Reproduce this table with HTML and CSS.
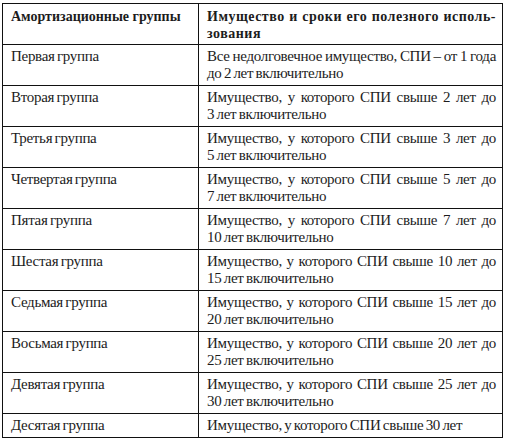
FILE: index.html
```
<!DOCTYPE html>
<html lang="ru">
<head>
<meta charset="utf-8">
<link rel="stylesheet" href="styles.css">
</head>
<body>
<table class="groups">
  <colgroup><col class="c1"><col class="c2"></colgroup>
  <thead>
    <tr><th>Амортизационные группы</th><th class="wide"><span class="hl">Имущество и сроки его полезного исполь-</span><span>зования</span></th></tr>
  </thead>
  <tbody>
    <tr><td>Первая группа</td><td class="desc">Все недолговечное имущество, СПИ – от 1&nbsp;года до 2&nbsp;лет включительно</td></tr>
    <tr><td>Вторая группа</td><td class="desc">Имущество, у которого СПИ свыше 2&nbsp;лет до 3&nbsp;лет включительно</td></tr>
    <tr><td>Третья группа</td><td class="desc">Имущество, у которого СПИ свыше 3&nbsp;лет до 5&nbsp;лет включительно</td></tr>
    <tr><td>Четвертая группа</td><td class="desc">Имущество, у которого СПИ свыше 5&nbsp;лет до 7&nbsp;лет включительно</td></tr>
    <tr><td>Пятая группа</td><td class="desc">Имущество, у которого СПИ свыше 7&nbsp;лет до 10&nbsp;лет включительно</td></tr>
    <tr><td>Шестая группа</td><td class="desc">Имущество, у которого СПИ свыше 10&nbsp;лет до 15&nbsp;лет включительно</td></tr>
    <tr><td>Седьмая группа</td><td class="desc">Имущество, у которого СПИ свыше 15&nbsp;лет до 20&nbsp;лет включительно</td></tr>
    <tr><td>Восьмая группа</td><td class="desc">Имущество, у которого СПИ свыше 20&nbsp;лет до 25&nbsp;лет включительно</td></tr>
    <tr><td>Девятая группа</td><td class="desc">Имущество, у которого СПИ свыше 25&nbsp;лет до 30&nbsp;лет включительно</td></tr>
    <tr><td>Десятая группа</td><td class="desc">Имущество, у которого СПИ свыше 30&nbsp;лет</td></tr>
  </tbody>
</table>
</body>
</html>
```
FILE: styles.css
```
html, body {
  margin: 0;
  padding: 0;
  background: #fff;
}
body {
  padding: 3px 0 0 2px;
  font-family: "Liberation Serif", "DejaVu Serif", serif;
  color: #1c1c1c;
}
.groups {
  border-collapse: collapse;
  width: 501px;
  table-layout: fixed;
  font-size: 15px;
  line-height: 17px;
}
.c1 { width: 196px; }
.groups th, .groups td {
  border: 1px solid #111;
  padding: 3px 6px 3px 8px;
  vertical-align: top;
  text-align: left;
}
.groups td {
  letter-spacing: -0.3px;
  word-spacing: -1.1px;
}
.groups th {
  font-weight: bold;
  font-size: 14px;
  padding-top: 4px;
  padding-bottom: 2px;
}
.groups th.wide {
  letter-spacing: 0.5px;
}
.hl {
  display: block;
  text-align: justify;
  text-align-last: justify;
}
.groups td.desc {
  text-align: justify;
}
```
